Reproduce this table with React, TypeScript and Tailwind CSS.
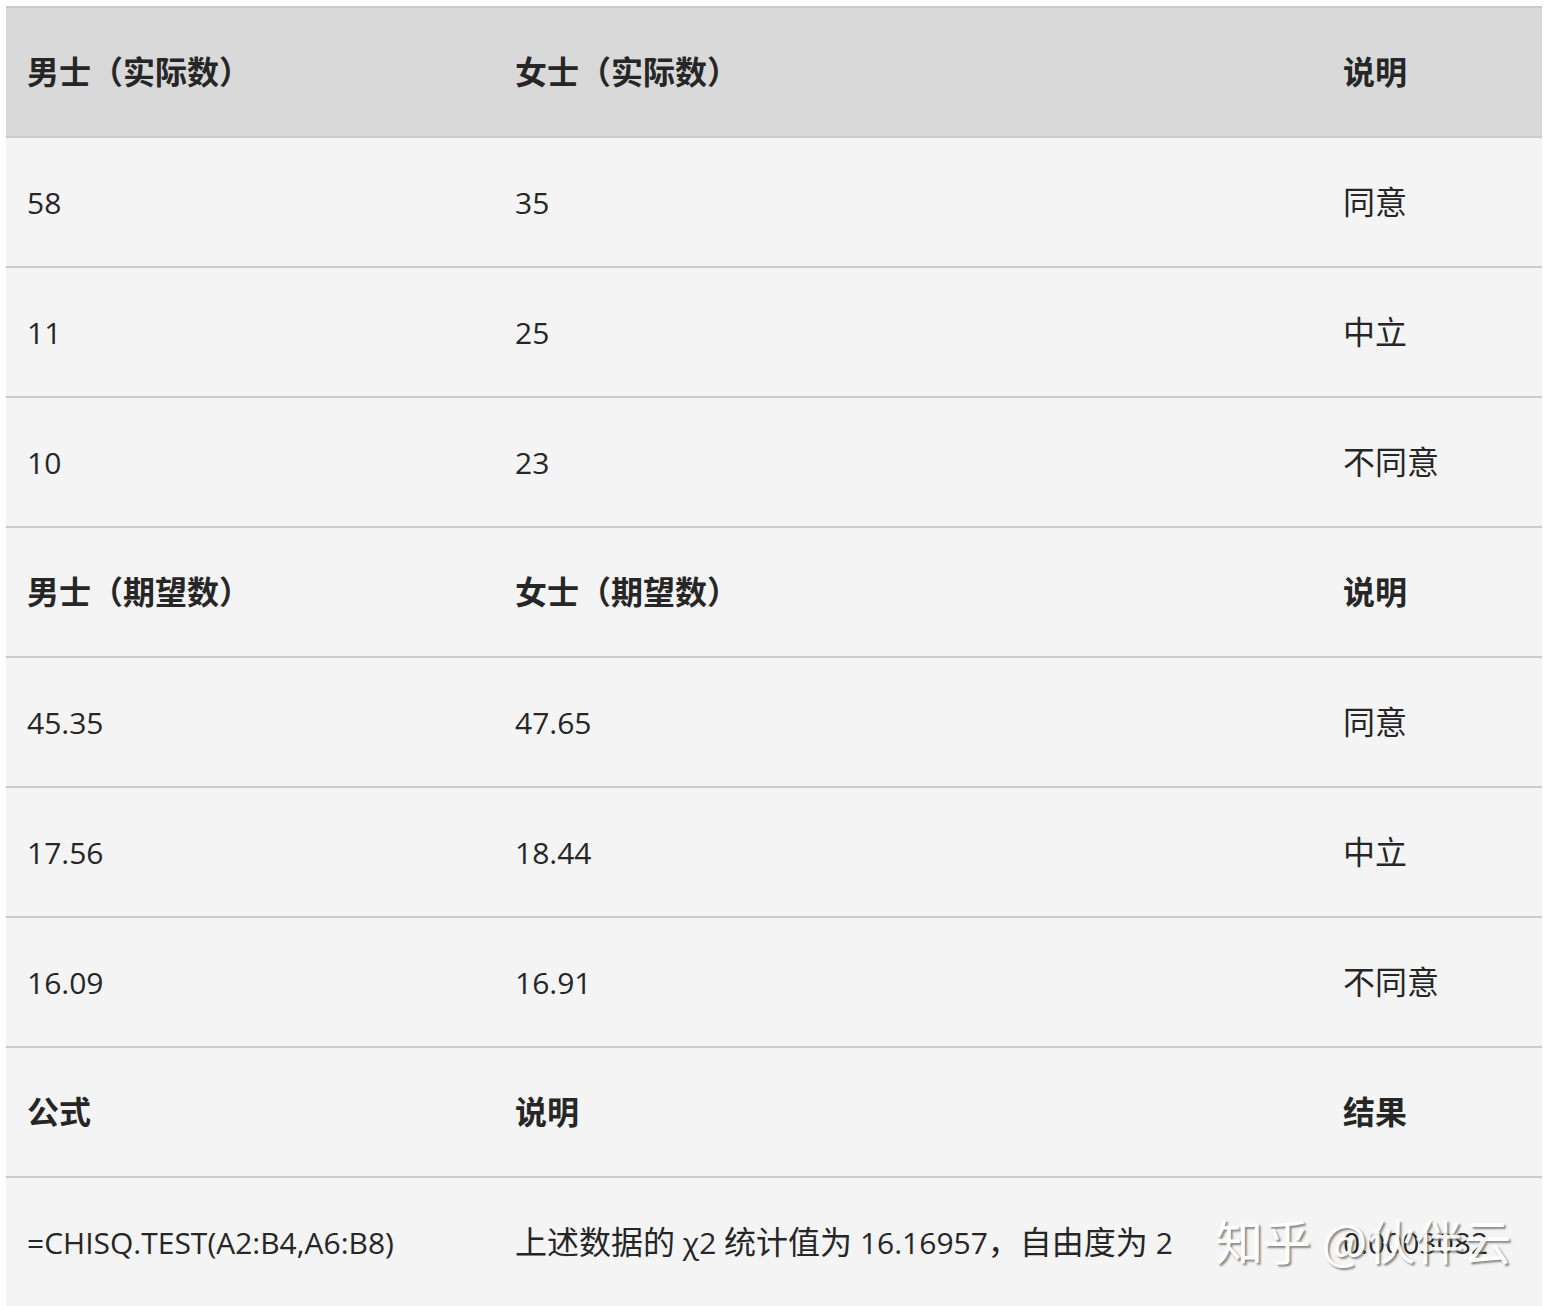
import React from "react";

type Row = { cells: [string, string, string]; bold?: boolean; head?: boolean };

const rows: Row[] = [
  { cells: ["男士（实际数）", "女士（实际数）", "说明"], bold: true, head: true },
  { cells: ["58", "35", "同意"] },
  { cells: ["11", "25", "中立"] },
  { cells: ["10", "23", "不同意"] },
  { cells: ["男士（期望数）", "女士（期望数）", "说明"], bold: true },
  { cells: ["45.35", "47.65", "同意"] },
  { cells: ["17.56", "18.44", "中立"] },
  { cells: ["16.09", "16.91", "不同意"] },
  { cells: ["公式", "说明", "结果"], bold: true },
  { cells: ["=CHISQ.TEST(A2:B4,A6:B8)", "上述数据的 χ2 统计值为 16.16957，自由度为 2", "0.0003082"] },
];

function Runs({ text }: { text: string }) {
  const parts = text.match(/[\u3000-\u9fff\uff00-\uffef]+|[^\u3000-\u9fff\uff00-\uffef]+/g) || [];
  return (
    <>
      {parts.map((p, k) =>
        /[\u3000-\u9fff\uff00-\uffef]/.test(p) ? (
          <span key={k} className="text-[32px]">
            {p}
          </span>
        ) : (
          <span key={k} className="text-[30px]">
            {p}
          </span>
        )
      )}
    </>
  );
}

export default function App() {
  return (
    <div
      className="w-[1546px] h-[1306px] overflow-hidden bg-white pt-[6px] pl-[6px]"
      style={{ fontFamily: '"Open Sans", "Noto Sans CJK SC", sans-serif' }}
    >
      <div className="w-[1536px] flex flex-col">
        {rows.map((r, i) => (
          <div
            key={i}
            className={
              "relative grid grid-cols-[488px_828px_220px] h-[130px] shrink-0 border-t-2 border-[#cccccc] items-center text-[#262626] " +
              (r.head ? "bg-[#d9d9d9]" : "bg-[#f4f4f4]")
            }
          >
            {r.cells.map((c, j) => (
              <div
                key={j}
                className={"pl-[21px] pt-[6px] whitespace-nowrap leading-[40px] " + (r.bold ? "font-bold" : "font-normal")}
              >
                <Runs text={c} />
              </div>
            ))}
            {i === rows.length - 1 && (
              <div
                className="absolute left-[1209px] top-[37px] text-[48px] leading-none text-white whitespace-nowrap"
                style={{
                  fontFamily: '"Noto Sans CJK SC", sans-serif',
                  textShadow: "2px 2px 2px rgba(100,100,100,0.8)",
                  opacity: 0.92,
                }}
              >
                知乎 @伙伴云
              </div>
            )}
          </div>
        ))}
      </div>
    </div>
  );
}
